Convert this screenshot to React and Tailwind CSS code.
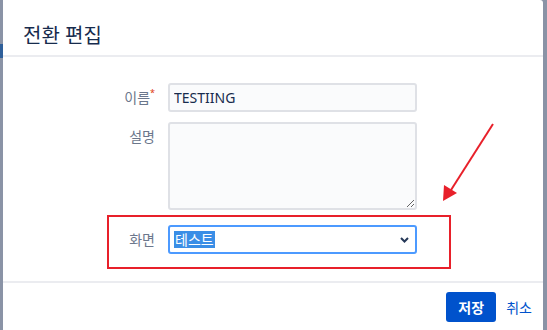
export default function App() {
  const font = { fontFamily: '"Noto Sans", "Noto Sans CJK KR", sans-serif' };
  return (
    <div
      className="relative w-[547px] h-[330px] overflow-hidden bg-[#8a93a6] flex"
      style={font}
    >
      {/* left backdrop strip */}
      <div className="w-[3px] flex flex-col">
        <div className="h-[44px] bg-[#8a93a6]" />
        <div className="h-[14px] bg-[#2f5f9a]" />
        <div className="flex-1 bg-[#8a93a6]" />
      </div>

      {/* dialog */}
      <div className="w-[540px] h-full bg-white flex flex-col rounded-tr-[3px]">
        <div className="h-[57px] shrink-0 pt-[22px] pl-[20px] border-b-2 border-[#ebecf0]">
          <h1 className="text-[20px] leading-[28px] text-[#172b4d] font-normal">전환 편집</h1>
        </div>

        <div className="flex-1 pt-[26px] pl-[104px]">
          <div className="flex w-[344px] px-[2px]">
            <label className="w-[46px] text-right text-[14px] leading-[29px] text-[#6b778c]">
              이름<span className="text-[#de350b] text-[9px] align-top leading-[20px]">*</span>
            </label>
            <input
              readOnly
              value="TESTIING"
              className="ml-[13px] w-[249px] h-[29px] px-[4px] border-2 border-[#dfe1e6] rounded-[3px] bg-[#fafbfc] text-[14px] text-[#172b4d] outline-none"
            />
          </div>

          <div className="flex w-[344px] px-[2px] mt-[10px]">
            <label className="w-[46px] text-right text-[14px] leading-[29px] text-[#6b778c]">설명</label>
            <textarea
              readOnly
              className="ml-[13px] w-[249px] h-[88px] border-2 border-[#dfe1e6] rounded-[3px] bg-[#fafbfc] outline-none"
            />
          </div>

          <div className="flex w-[344px] mt-[5px] border-2 border-[#e8202a] pt-[8px] pb-[13px]">
            <label className="w-[46px] text-right text-[14px] leading-[29px] text-[#6b778c]">화면</label>
            <div className="ml-[13px] w-[249px] h-[29px] border-2 border-[#4c9aff] rounded-[3px] bg-white flex items-center justify-between pl-[4px] pr-[6px]">
              <span className="bg-[#3a8ee6] text-white text-[14px] leading-[17px] px-px">테스트</span>
              <svg width="9" height="6" viewBox="0 0 9 6">
                <polyline points="1,1 4.5,4.5 8,1" fill="none" stroke="#253858" strokeWidth="2" />
              </svg>
            </div>
          </div>
        </div>

        <div className="h-[49px] shrink-0 border-t-2 border-[#ebecf0] flex justify-end items-start pt-[9px] pr-[11px]">
          <button className="w-[50px] h-[30px] bg-[#0052cc] rounded-[3px] text-white font-bold text-[14px]">
            저장
          </button>
          <button className="ml-[10px] h-[30px] text-[#0052cc] text-[14px]">취소</button>
        </div>
      </div>

      {/* annotation arrow */}
      <svg className="absolute left-0 top-0 pointer-events-none" width="547" height="330">
        <line x1="493" y1="124" x2="451" y2="190" stroke="#e8202a" strokeWidth="2" />
        <polygon points="443,201 444,185 457,193" fill="#e8202a" />
      </svg>
    </div>
  );
}
